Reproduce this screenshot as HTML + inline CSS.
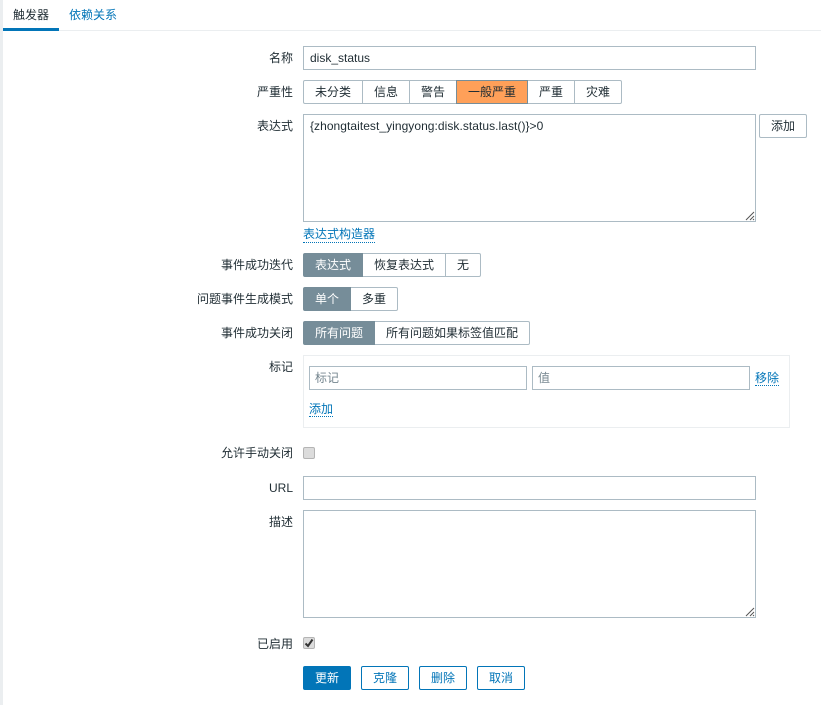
<!DOCTYPE html>
<html lang="zh">
<head>
<meta charset="utf-8">
<title>触发器</title>
<style>
html,body{margin:0;padding:0;background:#fff}
body{width:821px;height:705px;overflow:hidden;position:relative;font:12px/14px "Liberation Sans","Noto Sans CJK SC",sans-serif;color:#1f2c33}
div,span,a{position:absolute;box-sizing:border-box;white-space:nowrap}
.lbl{right:528px;text-align:right;height:14px;line-height:14px}
.in{border:1px solid #acbbc4;background:#fff;left:303px;width:453px;height:24px;padding:4px 6px;line-height:14px}
.seg{height:24px;border:1px solid #acbbc4;border-left:0;text-align:center;line-height:22px;background:#fff;color:#1f2c33}
.seg.f{border-left:1px solid #acbbc4;border-radius:2px 0 0 2px}
.seg.l{border-radius:0 2px 2px 0}
.seg.on{background:#768d99;border-color:#768d99;color:#fff}
.seg.sev{background:#ffa059;border:1px solid #768d99;color:#1f2c33}
.lnk{color:#0275b8;border-bottom:1px dotted #0275b8;height:15px;line-height:14px}
.btn{top:666px;width:48px;height:24px;border:1px solid #0275b8;border-radius:2px;color:#0275b8;text-align:center;line-height:22px;background:#fff}
.cb{left:303px;width:12px;height:12px;background:#dcdcdc;border:1px solid #b4b4b4;border-radius:2px}
.grip{position:absolute;right:0;bottom:0;width:10px;height:10px}
.ph{color:#75868f;padding-left:5px}
</style>
</head>
<body>
<div style="left:0;top:0;width:3px;height:705px;background:#ebeef0"></div>
<div style="left:3px;top:30px;width:818px;height:1px;background:#ebeef0"></div>
<div style="left:3px;top:28px;width:56px;height:3px;background:#0275b8"></div>
<span style="left:13px;top:8px">触发器</span>
<span style="left:69px;top:8px;color:#0275b8">依赖关系</span>

<span class="lbl" style="top:51px">名称</span>
<div class="in" style="top:46px">disk_status</div>

<span class="lbl" style="top:85px">严重性</span>
<div class="seg f" style="left:303px;top:80px;width:60px">未分类</div>
<div class="seg" style="left:363px;top:80px;width:47px">信息</div>
<div class="seg" style="left:410px;top:80px;width:47px">警告</div>
<div class="seg sev" style="left:456px;top:80px;width:72px">一般严重</div>
<div class="seg" style="left:528px;top:80px;width:47px">严重</div>
<div class="seg l" style="left:575px;top:80px;width:47px">灾难</div>

<span class="lbl" style="top:119px">表达式</span>
<div class="in" style="top:114px;height:108px;letter-spacing:.05px">{zhongtaitest_yingyong:disk.status.last()}&gt;0<svg class="grip" viewBox="0 0 10 10"><path d="M1 9L9 1M5 9L9 5M8 9L9 8" stroke="#555" stroke-width="1" fill="none"/></svg></div>
<div class="btn" style="left:759px;top:114px;border-color:#acbbc4;color:#1f2c33">添加</div>
<a class="lnk" style="left:303px;top:227px;height:16px">表达式构造器</a>

<span class="lbl" style="top:258px">事件成功迭代</span>
<div class="seg f on" style="left:303px;top:253px;width:60px">表达式</div>
<div class="seg" style="left:363px;top:253px;width:83px">恢复表达式</div>
<div class="seg l" style="left:446px;top:253px;width:35px">无</div>

<span class="lbl" style="top:292px">问题事件生成模式</span>
<div class="seg f on" style="left:303px;top:287px;width:48px">单个</div>
<div class="seg l" style="left:351px;top:287px;width:47px">多重</div>

<span class="lbl" style="top:326px">事件成功关闭</span>
<div class="seg f on" style="left:303px;top:321px;width:72px">所有问题</div>
<div class="seg l" style="left:375px;top:321px;width:155px">所有问题如果标签值匹配</div>

<span class="lbl" style="top:360px">标记</span>
<div style="left:303px;top:355px;width:487px;height:73px;border:1px solid #ebeef0"></div>
<div class="in ph" style="left:309px;top:366px;width:218px">标记</div>
<div class="in ph" style="left:532px;top:366px;width:218px">值</div>
<a class="lnk" style="left:755px;top:371px">移除</a>
<a class="lnk" style="left:309px;top:402px">添加</a>

<span class="lbl" style="top:446px">允许手动关闭</span>
<div class="cb" style="top:447px"></div>

<span class="lbl" style="top:481px">URL</span>
<div class="in" style="top:476px"></div>

<span class="lbl" style="top:515px">描述</span>
<div class="in" style="top:510px;height:108px"><svg class="grip" viewBox="0 0 10 10"><path d="M1 9L9 1M5 9L9 5M8 9L9 8" stroke="#555" stroke-width="1" fill="none"/></svg></div>

<span class="lbl" style="top:637px">已启用</span>
<div class="cb" style="top:637px"><svg style="position:absolute;left:0;top:0" width="10" height="10" viewBox="0 0 10 10"><path d="M1.5 5.5L4 8L8.5 1.5" stroke="#333" stroke-width="2" fill="none"/></svg></div>

<div class="btn" style="left:303px;background:#0275b8;color:#fff">更新</div>
<div class="btn" style="left:361px">克隆</div>
<div class="btn" style="left:419px">删除</div>
<div class="btn" style="left:477px">取消</div>
</body>
</html>
